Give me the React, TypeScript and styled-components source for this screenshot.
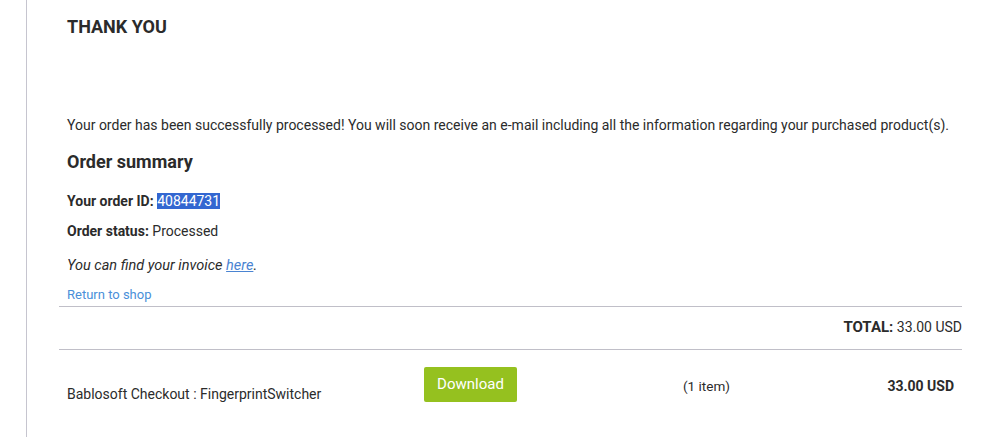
import React from 'react'
import styled, { createGlobalStyle } from 'styled-components'

const GlobalStyle = createGlobalStyle`
	html, body {
		margin: 0;
		padding: 0;
		background: #fff;
	}
	body {
		font-family: Roboto, "Liberation Sans", Arial, sans-serif;
		color: #2b2b2b;
	}
`

export default function App() {
	return (
		<>
			<GlobalStyle />
			<Page>
				<Rail />
				<Main>
					<Title>THANK YOU</Title>
					<Lead>
						Your order has been successfully processed! You will soon receive an e-mail including all the
						information regarding your purchased product(s).
					</Lead>
					<Heading>Order summary</Heading>
					<Field>
						<b>Your order ID:</b> <Selected>40844731</Selected>
					</Field>
					<Field $gap={10}>
						<b>Order status:</b> Processed
					</Field>
					<Invoice>
						You can find your invoice <InvoiceLink href="#">here</InvoiceLink>.
					</Invoice>
					<ShopLink href="#">Return to shop</ShopLink>
					<Total>
						<b>TOTAL:</b> 33.00 USD
					</Total>
					<ItemRow>
						<ItemName>Bablosoft Checkout : FingerprintSwitcher</ItemName>
						<DownloadButton>Download</DownloadButton>
						<ItemCount>(1 item)</ItemCount>
						<ItemPrice>33.00 USD</ItemPrice>
					</ItemRow>
				</Main>
			</Page>
		</>
	)
}

const Page = styled.div`
	display: flex;
	min-height: 437px;
`

const Rail = styled.div`
	width: 26px;
	flex: none;
	border-right: 1px solid #c6c5cf;
`

const Main = styled.main`
	width: 903px;
	margin-left: 32px;
	display: flex;
	flex-direction: column;
`

const Title = styled.h1`
	margin: 17px 0 0;
	padding-left: 8px;
	font-size: 18px;
	line-height: 20px;
	font-weight: 700;
	color: #2b2b2b;
`

const Lead = styled.p`
	margin: 78px 0 0;
	padding-left: 8px;
	font-size: 14px;
	line-height: 20px;
`

const Heading = styled.h2`
	margin: 17px 0 0;
	padding-left: 8px;
	font-size: 18px;
	line-height: 20px;
	font-weight: 700;
`

const Field = styled.div<{ $gap?: number }>`
	margin-top: ${(p) => p.$gap ?? 19}px;
	padding-left: 8px;
	font-size: 14px;
	line-height: 20px;

	b {
		font-weight: 700;
	}
`

const Selected = styled.span`
	background: #3367d1;
	color: #fff;
`

const Invoice = styled.p`
	margin: 15px 0 0;
	padding-left: 8px;
	font-size: 14.5px;
	line-height: 20px;
	font-style: italic;
`

const InvoiceLink = styled.a`
	color: #4a84d2;
	text-decoration: underline;
`

const ShopLink = styled.a`
	display: block;
	margin-top: 10px;
	padding-left: 8px;
	font-size: 13px;
	line-height: 18px;
	color: #4a90d9;
	text-decoration: none;
	border-bottom: 1px solid #c0bfc8;
	padding-bottom: 2px;
`

const Total = styled.div`
	padding: 10px 0 12px;
	text-align: right;
	font-size: 14px;
	line-height: 20px;
	border-bottom: 1px solid #c0bfc8;

	b {
		font-size: 15px;
		font-weight: 700;
	}
`

const ItemRow = styled.div`
	display: flex;
	align-items: center;
	padding: 14px 8px 0;
	font-size: 14px;
	line-height: 20px;
`

const ItemName = styled.div`
	width: 357px;
	flex: none;
	margin-top: 20px;
`

const DownloadButton = styled.button`
	width: 93px;
	height: 35px;
	flex: none;
	border: none;
	border-radius: 2px;
	background: #95c11f;
	color: #fff;
	font-family: Roboto, "Liberation Sans", Arial, sans-serif;
	font-size: 15px;
	cursor: pointer;
`

const ItemCount = styled.div`
	margin-left: 166px;
	margin-top: 4px;
	font-size: 13.5px;
	white-space: nowrap;
`

const ItemPrice = styled.div`
	margin-left: auto;
	margin-top: 4px;
	font-weight: 700;
`
